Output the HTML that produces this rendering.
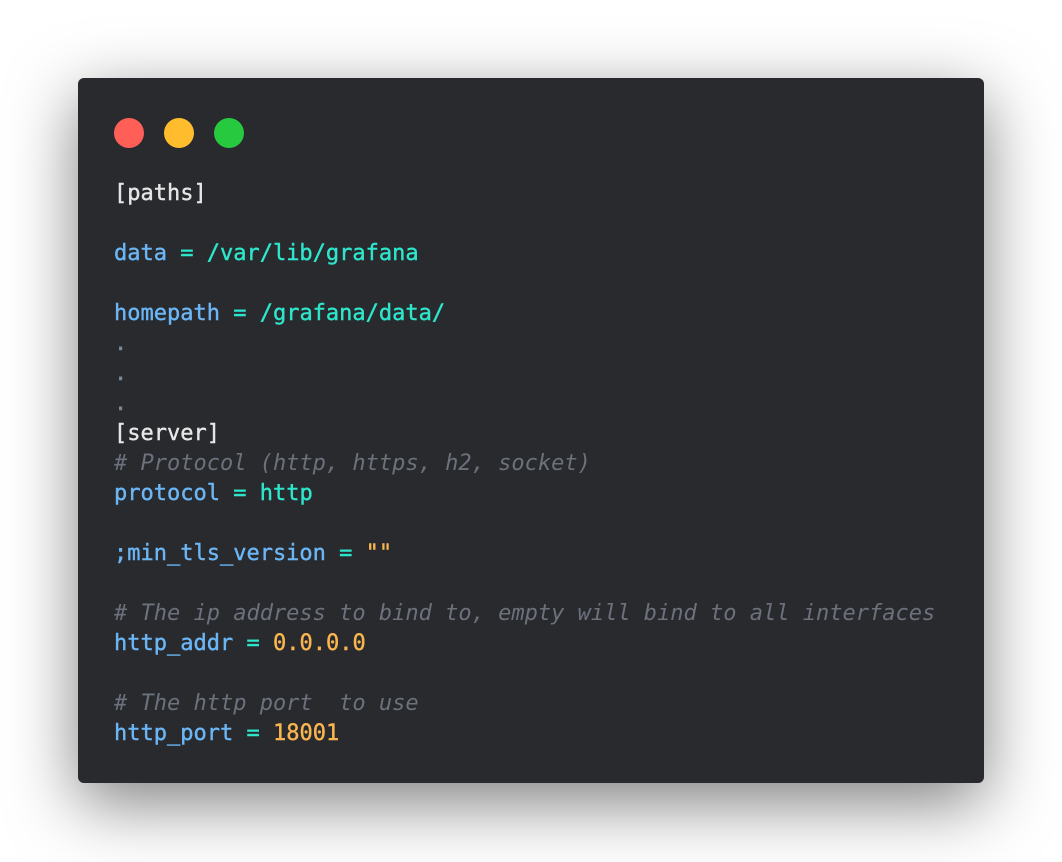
<!DOCTYPE html>
<html><head><style>
html,body{margin:0;padding:0;background:#fff;width:1062px;height:862px;overflow:hidden}
.card{position:absolute;left:78px;top:78px;width:906px;height:705px;background:#282a2e;border-radius:6px;box-shadow:0 20px 68px rgba(0,0,0,0.5)}
.dot{position:absolute;top:40px;width:30px;height:30px;border-radius:50%}
pre{position:absolute;left:36px;top:101px;margin:0;font-family:"DejaVu Sans Mono","Liberation Mono",monospace;font-size:22px;line-height:30px;color:#e6e6e6;-webkit-text-stroke:0.4px currentColor}
.k{color:#6cb6f5}.v{color:#2ee6cc}.n{color:#f9b54f}.c{color:#6c717c;font-style:italic;-webkit-text-stroke:0}.d{color:#7a8a96}
</style></head><body>
<div class="card">
<div class="dot" style="left:36px;background:#ff5f56"></div>
<div class="dot" style="left:86px;background:#ffbd2e"></div>
<div class="dot" style="left:136px;background:#27c93f"></div>
<pre>[paths]

<span class="k">data</span><span class="v"> = /var/lib/grafana</span>

<span class="k">homepath</span><span class="v"> = /grafana/data/</span>
<span class="d">.</span>
<span class="d">.</span>
<span class="d">.</span>
[server]
<span class="c"># Protocol (http, https, h2, socket)</span>
<span class="k">protocol</span><span class="v"> = http</span>

<span class="k">;min_tls_version</span><span class="v"> = </span><span class="n">""</span>

<span class="c"># The ip address to bind to, empty will bind to all interfaces</span>
<span class="k">http_addr</span><span class="v"> = </span><span class="n">0.0.0.0</span>

<span class="c"># The http port  to use</span>
<span class="k">http_port</span><span class="v"> = </span><span class="n">18001</span></pre>
</div>
</body></html>
